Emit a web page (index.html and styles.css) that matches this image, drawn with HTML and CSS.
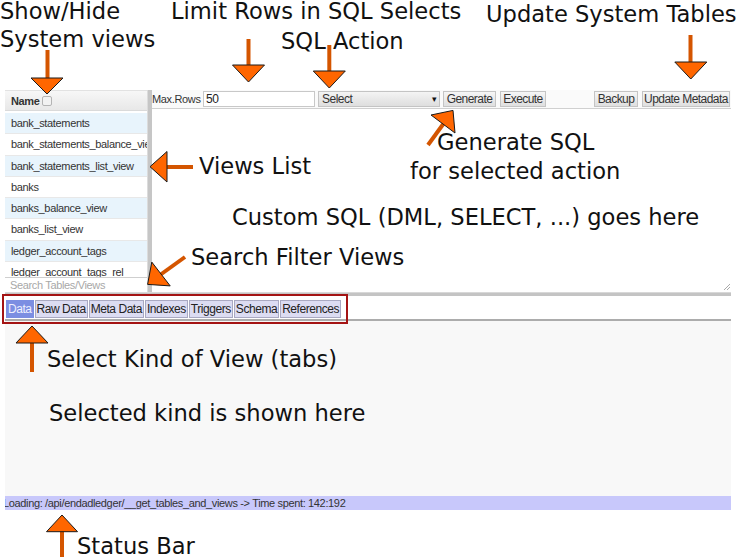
FILE: index.html
```html
<!DOCTYPE html>
<html>
<head>
<meta charset="utf-8">
<link rel="stylesheet" href="styles.css">
</head>
<body>
<div class="top-space"></div>
<div class="app">
  <div class="upper">
    <div class="left">
      <div class="lhead">Name <span class="cb"></span></div>
      <div class="list">
        <div class="row alt">bank_statements</div>
        <div class="row">bank_statements_balance_view</div>
        <div class="row alt">bank_statements_list_view</div>
        <div class="row">banks</div>
        <div class="row alt">banks_balance_view</div>
        <div class="row">banks_list_view</div>
        <div class="row alt">ledger_account_tags</div>
        <div class="row">ledger_account_tags_rel</div>
      </div>
      <div class="search">Search Tables/Views</div>
    </div>
    <div class="vsplit"></div>
    <div class="right">
      <div class="toolbar">
        <span class="lbl">Max.Rows</span>
        <span class="input">50</span>
        <span class="select"><span>Select</span><span class="caret">▾</span></span>
        <span class="btn b-gen">Generate</span>
        <span class="btn b-exe">Execute</span>
        <span class="btn b-bak">Backup</span>
        <span class="btn b-upd">Update Metadata</span>
      </div>
      <div class="sql">
        <svg class="grip" width="6" height="6" viewBox="0 0 6 6"><path d="M0 6 L6 0 M3 6 L6 3" stroke="#aaa" stroke-width="1"/></svg>
      </div>
    </div>
  </div>
  <div class="hsplit"></div>
  <div class="tabsbar">
    <span class="tab sel">Data</span><span class="tab">Raw Data</span><span class="tab">Meta Data</span><span class="tab">Indexes</span><span class="tab">Triggers</span><span class="tab">Schema</span><span class="tab">References</span>
  </div>
  <div class="content"></div>
  <div class="status">Loading: /api/endadledger/__get_tables_and_views -&gt; Time spent: 142:192</div>
</div>

<div class="redbox"></div>

<div class="note n-show">Show/Hide<br>System views</div>
<div class="note n-limit">Limit Rows in SQL Selects</div>
<div class="note n-action">SQL Action</div>
<div class="note n-update">Update System Tables</div>
<div class="note n-gen1">Generate SQL</div>
<div class="note n-gen2">for selected action</div>
<div class="note n-views">Views List</div>
<div class="note n-custom">Custom SQL (DML, SELECT, ...) goes here</div>
<div class="note n-search">Search Filter Views</div>
<div class="note n-kind">Select Kind of View (tabs)</div>
<div class="note n-shown">Selected kind is shown here</div>
<div class="note n-status">Status Bar</div>

<svg class="arrows" width="736" height="557" viewBox="0 0 736 557">
  <g class="shaft" stroke="#d45500" stroke-width="4" fill="none">
    <line x1="47.5" y1="50" x2="47.5" y2="79"/>
    <line x1="248.5" y1="39" x2="248.5" y2="66"/>
    <line x1="329.3" y1="45" x2="329.3" y2="72"/>
    <line x1="690.5" y1="35" x2="690.5" y2="63"/>
    <line x1="166" y1="167" x2="193" y2="167"/>
    <line x1="428" y1="145" x2="444" y2="123"/>
    <line x1="185" y1="257" x2="160" y2="275"/>
    <line x1="32" y1="342" x2="32" y2="372"/>
    <line x1="62" y1="530" x2="62" y2="557"/>
  </g>
  <g fill="#ff6600" stroke="#1a1a1a" stroke-width="1">
    <polygon points="31,78 63,78 47,94"/>
    <polygon points="232.5,65 264.5,65 248.5,82"/>
    <polygon points="313.3,71 345.3,71 329.3,88"/>
    <polygon points="674.8,62 706.8,62 690.8,79"/>
    <polygon points="167,151.5 167,182 150,166.7"/>
    <polygon points="431,115 455,133 453,110.4"/>
    <polygon points="151.8,262.1 170.2,285.9 147.6,284.4"/>
    <polygon points="16,343 48,343 32,326"/>
    <polygon points="46.5,531.7 77.5,531.7 62,515"/>
  </g>
</svg>
</body>
</html>
```
FILE: styles.css
```css
* { box-sizing: border-box; }
html, body { margin: 0; padding: 0; }
body {
  width: 736px;
  height: 557px;
  overflow: hidden;
  background: #fff;
  position: relative;
  font-family: "Liberation Sans", Arial, sans-serif;
}
.top-space { height: 90px; }
.app {
  margin-left: 5px;
  width: 726px;
  font-size: 11px;
  letter-spacing: -0.35px;
  color: #333;
}
.upper { display: flex; height: 202px; }
.left {
  width: 142px;
  display: flex;
  flex-direction: column;
  overflow: hidden;
}
.lhead {
  height: 21px;
  flex: none;
  border-top: 1px solid #e2e2e2;
  border-bottom: 1px solid #dadada;
  background: linear-gradient(#f7f7f7, #e8e8e8);
  display: flex;
  align-items: center;
  padding-left: 6px;
  font-weight: bold;
  gap: 2px;
}
.cb {
  width: 10px;
  height: 10px;
  border: 1px solid #b4b4b4;
  border-radius: 2px;
  background: #f2f2f2;
}
.list {
  height: 164px;
  flex: none;
  margin-top: 2px;
  overflow: hidden;
}
.row {
  height: 21.3px;
  line-height: 20px;
  padding-left: 6px;
  white-space: nowrap;
  border-bottom: 1px solid #e8e8e8;
}
.row.alt { background: #e8f4fc; }
.search {
  height: 15px;
  flex: none;
  border-top: 1px solid #cfcfcf;
  color: #a8a8a8;
  padding-left: 5px;
  line-height: 14px;
  white-space: nowrap;
}
.vsplit {
  width: 5px;
  background: #c6c6c6;
  border-left: 1px solid #dcdcdc;
}
.right {
  flex: 1;
  display: flex;
  flex-direction: column;
  min-width: 0;
}
.toolbar {
  height: 19px;
  flex: none;
  display: flex;
  align-items: center;
  border-bottom: 1px solid #d0d0d0;
  padding-right: 1px;
  background: #fafafa;
}
.lbl { width: 48px; white-space: nowrap; }
.input {
  margin-left: 3px;
  width: 112px;
  height: 16px;
  border: 1px solid #c8c8c8;
  background: #fff;
  line-height: 14px;
  padding-left: 2px;
  color: #222;
  font-size: 12px;
}
.select {
  margin-left: 3px;
  width: 122px;
  height: 16px;
  border: 1px solid #c4c4c4;
  background: linear-gradient(#f4f4f4, #dedede);
  display: flex;
  justify-content: space-between;
  align-items: center;
  padding: 0 3px;
  color: #333;
  font-size: 12px;
  letter-spacing: -0.5px;
}
.caret { font-size: 9px; color: #111; }
.btn {
  height: 16px;
  border: 1px solid #c4c4c4;
  background: linear-gradient(#f6f6f6, #dfdfdf);
  text-align: center;
  line-height: 14px;
  color: #333;
  white-space: nowrap;
  font-size: 12px;
  letter-spacing: -0.55px;
}
.b-gen { margin-left: 3px; width: 53px; }
.b-exe { margin-left: 4px; width: 46px; }
.b-bak { margin-left: auto; width: 44px; }
.b-upd { margin-left: 4px; width: 88px; }
.sql {
  flex: 1;
  background: #fff;
  position: relative;
}
.grip { position: absolute; right: 1px; bottom: 2px; }
.hsplit {
  height: 4px;
  background: #c4c4c4;
  border-top: 1px solid #d8d8d8;
}
.tabsbar {
  height: 25px;
  padding: 4px 0 0 1px;
  border-bottom: 2px solid #acacac;
  display: flex;
  align-items: flex-start;
  background: #fff;
}
.tab {
  height: 18px;
  border: 1px solid #a9a9c2;
  background: #dcdcf2;
  padding: 0 1px;
  font-size: 12px;
  letter-spacing: -0.45px;
  line-height: 16px;
  margin-right: 1px;
  color: #222;
  white-space: nowrap;
}
.tab.sel {
  background: #7c8ee2;
  border-color: #7c8ee2;
  color: #eef0ff;
}
.content {
  height: 175px;
  background: #f8f8f8;
}
.status {
  height: 14px;
  background: #c8c8fb;
  line-height: 14px;
  overflow: hidden;
  white-space: nowrap;
  text-indent: -2px;
  color: #333;
}
.redbox {
  position: absolute;
  left: 2px;
  top: 294px;
  width: 346px;
  height: 30px;
  border: 2px solid #a41414;
}
.note {
  position: absolute;
  font-family: "DejaVu Sans", sans-serif;
  font-size: 22.6px;
  line-height: 22px;
  white-space: nowrap;
  color: #111;
}
.n-show { left: 0; top: -3px; line-height: 28px; }
.n-limit { left: 171px; top: 0; }
.n-action { left: 281px; top: 30px; }
.n-update { left: 486px; top: 3px; }
.n-gen1 { left: 437px; top: 131px; }
.n-gen2 { left: 410px; top: 160px; }
.n-views { left: 199px; top: 155px; }
.n-custom { left: 232px; top: 206px; }
.n-search { left: 191px; top: 246px; }
.n-kind { left: 47px; top: 348px; }
.n-shown { left: 49px; top: 402px; }
.n-status { left: 77px; top: 535px; }
.arrows {
  position: absolute;
  left: 0;
  top: 0;
  pointer-events: none;
}
```
